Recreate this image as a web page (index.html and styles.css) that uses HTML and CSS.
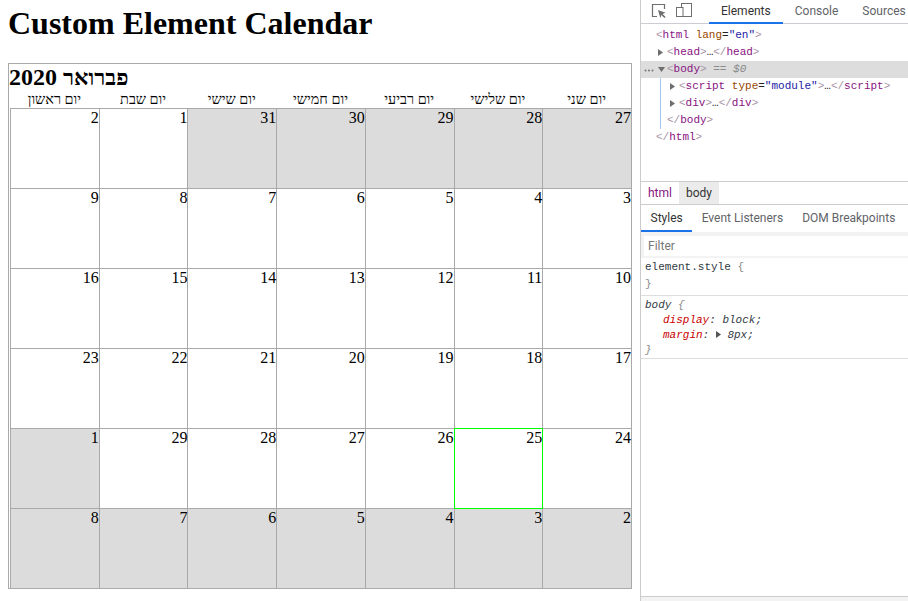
FILE: index.html
```html
<!DOCTYPE html>
<html lang="en">
<head>
<meta charset="utf-8">
<title>Custom Element Calendar</title>
<link rel="stylesheet" href="styles.css">
</head>
<body>
<div class="screen">
  <main class="page">
    <h1 class="title">Custom Element Calendar</h1>
    <div class="calendar">
      <h2 class="month"><span class="month-name">פברואר</span> 2020</h2>
      <div class="weekdays">
        <div>יום שני</div>
        <div>יום שלישי</div>
        <div>יום רביעי</div>
        <div>יום חמישי</div>
        <div>יום שישי</div>
        <div>יום שבת</div>
        <div>יום ראשון</div>
      </div>
      <div class="days">
        <div class="day other">27</div>
        <div class="day other">28</div>
        <div class="day other">29</div>
        <div class="day other">30</div>
        <div class="day other">31</div>
        <div class="day">1</div>
        <div class="day">2</div>

        <div class="day">3</div>
        <div class="day">4</div>
        <div class="day">5</div>
        <div class="day">6</div>
        <div class="day">7</div>
        <div class="day">8</div>
        <div class="day">9</div>

        <div class="day">10</div>
        <div class="day">11</div>
        <div class="day">12</div>
        <div class="day">13</div>
        <div class="day">14</div>
        <div class="day">15</div>
        <div class="day">16</div>

        <div class="day">17</div>
        <div class="day">18</div>
        <div class="day">19</div>
        <div class="day">20</div>
        <div class="day">21</div>
        <div class="day">22</div>
        <div class="day">23</div>

        <div class="day">24</div>
        <div class="day today">25</div>
        <div class="day">26</div>
        <div class="day">27</div>
        <div class="day">28</div>
        <div class="day">29</div>
        <div class="day other">1</div>

        <div class="day other">2</div>
        <div class="day other">3</div>
        <div class="day other">4</div>
        <div class="day other">5</div>
        <div class="day other">6</div>
        <div class="day other">7</div>
        <div class="day other">8</div>
      </div>
    </div>
  </main>

  <aside class="devtools">
    <div class="toolbar">
      <span class="tool tool-inspect">
        <svg width="16" height="16" viewBox="0 0 16 16"><path d="M6 13.5H1.5V1.5H13.5V6" fill="none" stroke="#6e6e6e" stroke-width="1.2"/><path d="M7 7L14.5 9.8L11.6 10.9L14.6 13.9L13.4 15.1L10.4 12.1L9.3 15Z" fill="#6e6e6e"/></svg>
      </span>
      <span class="tool tool-device">
        <svg width="16" height="16" viewBox="0 0 16 16"><rect x="5.5" y="0.5" width="10" height="13" fill="none" stroke="#6e6e6e"/><rect x="0.5" y="4.5" width="6.5" height="9" fill="#fff" stroke="#6e6e6e"/></svg>
      </span>
      <span class="tool-sep"></span>
      <span class="tab active">Elements</span>
      <span class="tab">Console</span>
      <span class="tab">Sources</span>
    </div>

    <div class="tree">
      <div class="row pad-root"><span class="tg">&lt;</span><span class="tn">html</span> <span class="an">lang</span>=<span class="av">"en"</span><span class="tg">&gt;</span></div>
      <div class="row pad-1"><span class="twisty"><svg width="5" height="7" viewBox="0 0 5 7"><path d="M0 0L5 3.5L0 7Z" fill="#6e6e6e"/></svg></span><span class="tg">&lt;</span><span class="tn">head</span><span class="tg">&gt;</span>…<span class="tg">&lt;/</span><span class="tn">head</span><span class="tg">&gt;</span></div>
      <div class="row row-selected"><span class="dots"><svg width="10" height="3" viewBox="0 0 10 3"><circle cx="1.5" cy="1.5" r="1" fill="#777"/><circle cx="5" cy="1.5" r="1" fill="#777"/><circle cx="8.5" cy="1.5" r="1" fill="#777"/></svg></span><span class="twisty"><svg width="7" height="5" viewBox="0 0 7 5"><path d="M0 0H7L3.5 5Z" fill="#6e6e6e"/></svg></span><span class="tg">&lt;</span><span class="tn">body</span><span class="tg">&gt;</span><span class="eq"> == $0</span></div>
      <div class="children">
        <div class="row pad-c1"><span class="twisty"><svg width="5" height="7" viewBox="0 0 5 7"><path d="M0 0L5 3.5L0 7Z" fill="#6e6e6e"/></svg></span><span class="tg">&lt;</span><span class="tn">script</span> <span class="an">type</span>=<span class="av">"module"</span><span class="tg">&gt;</span>…<span class="tg">&lt;/</span><span class="tn">script</span><span class="tg">&gt;</span></div>
        <div class="row pad-c1"><span class="twisty"><svg width="5" height="7" viewBox="0 0 5 7"><path d="M0 0L5 3.5L0 7Z" fill="#6e6e6e"/></svg></span><span class="tg">&lt;</span><span class="tn">div</span><span class="tg">&gt;</span>…<span class="tg">&lt;/</span><span class="tn">div</span><span class="tg">&gt;</span></div>
        <div class="row pad-c2"><span class="tg">&lt;/</span><span class="tn">body</span><span class="tg">&gt;</span></div>
      </div>
      <div class="row pad-root"><span class="tg">&lt;/</span><span class="tn">html</span><span class="tg">&gt;</span></div>
    </div>

    <div class="crumbs">
      <span class="crumb crumb-tag">html</span>
      <span class="crumb crumb-sel">body</span>
    </div>

    <div class="subtabs">
      <span class="subtab active">Styles</span>
      <span class="subtab">Event Listeners</span>
      <span class="subtab">DOM Breakpoints</span>
    </div>

    <div class="filter-bar">
      <div class="filter">Filter</div>
    </div>

    <div class="rule rule-element">
      <div>element.style <span class="brace">{</span></div>
      <div class="brace">}</div>
    </div>
    <div class="rule rule-ua">
      <div>body <span class="brace">{</span></div>
      <div class="decl"><span class="prop">display</span>: block;</div>
      <div class="decl"><span class="prop">margin</span>: <svg class="expand" width="5" height="7" viewBox="0 0 5 7"><path d="M0 0L5 3.5L0 7Z" fill="#555"/></svg> 8px;</div>
      <div class="brace">}</div>
    </div>

    <div class="spacer"></div>
    <div class="statusbar"></div>
  </aside>
</div>
</body>
</html>
```
FILE: styles.css
```css
* {
  box-sizing: border-box;
}

body {
  margin: 0;
  background: #fff;
}

.screen {
  display: flex;
  width: 908px;
  height: 601px;
  overflow: hidden;
}

/* ---------- page ---------- */
.page {
  flex: none;
  width: 640px;
  padding: 5px 8px 0;
  font-family: "Liberation Serif", "Times New Roman", serif;
  color: #000;
}

.title {
  margin: 0 0 21px;
  font-size: 32px;
  line-height: 37px;
  font-weight: bold;
}

.calendar {
  border: 1px solid #a9a9a9;
}

.month {
  margin: 0;
  height: 26px;
  overflow: hidden;
  font-size: 24px;
  line-height: 26px;
  font-weight: bold;
  direction: ltr;
  text-align: left;
}

.month-name {
  font-size: 22.5px;
}

.weekdays {
  display: grid;
  grid-template-columns: repeat(7, 1fr);
  direction: rtl;
  margin-left: 1px;
  height: 18px;
  padding-top: 1px;
  font-size: 14.4px;
  line-height: 17px;
  text-align: center;
  overflow: hidden;
}

.days {
  display: grid;
  grid-template-columns: repeat(7, 1fr);
  grid-auto-rows: 80px;
  direction: rtl;
  margin-left: 1px;
  font-size: 16px;
  line-height: 18px;
}

.day {
  border-top: 1px solid #a9a9a9;
  border-left: 1px solid #a9a9a9;
  text-align: right;
}

.day.other {
  background: #dcdcdc;
}

.day.today {
  position: relative;
  z-index: 1;
}

.day.today::after {
  content: "";
  position: absolute;
  top: -1px;
  left: -1px;
  right: -1px;
  bottom: -1px;
  border: 1px solid #00ff00;
}

/* ---------- devtools ---------- */
.devtools {
  flex: none;
  width: 268px;
  border-left: 1px solid #cccccc;
  display: flex;
  flex-direction: column;
  font-family: Roboto, "Segoe UI", sans-serif;
  font-size: 12px;
  color: #333;
  background: #fff;
}

.toolbar {
  flex: none;
  height: 24px;
  border-bottom: 1px solid #cacdd1;
  display: flex;
  align-items: center;
  padding-left: 10px;
}

.tool {
  display: flex;
  width: 16px;
  height: 16px;
}

.tool-inspect {
  margin-top: -2px;
}

.tool-device {
  margin-left: 9px;
  margin-top: -1px;
}

.tool-sep {
  width: 1px;
  height: 16px;
  background: #cccccc;
  margin: 0 6px 0 11px;
}

.tab {
  align-self: stretch;
  height: 24px;
  margin-bottom: -1px;
  padding: 0 12px;
  line-height: 22px;
  color: #5f6368;
  white-space: nowrap;
}

.tab.active {
  color: #333;
  box-shadow: inset 0 -2px 0 #1a73e8;
}

.tree {
  flex: none;
  height: 157px;
  padding-top: 3px;
  font-family: "Liberation Mono", "DejaVu Sans Mono", monospace;
  font-size: 11px;
  color: #222;
}

.row {
  height: 17px;
  line-height: 17px;
  white-space: nowrap;
}

.pad-root {
  padding-left: 15px;
}

.pad-1 {
  padding-left: 17px;
}

.row-selected {
  background: #dddddd;
  padding-left: 2px;
}

.children {
  margin-left: 19px;
  border-left: 1px solid #a8c6ef;
}

.pad-c1 {
  padding-left: 9px;
}

.pad-c2 {
  padding-left: 6px;
}

.twisty {
  display: inline-block;
  width: 9px;
  vertical-align: top;
}

.twisty svg {
  display: block;
  margin-top: 5px;
}

.row-selected .twisty svg {
  margin-top: 6px;
}

.dots {
  display: inline-block;
  width: 15px;
  vertical-align: top;
}

.dots svg {
  display: block;
  margin-top: 8px;
  margin-left: 1px;
}

.tg {
  color: #a894a6;
}

.tn {
  color: #881280;
}

.an {
  color: #994500;
}

.av {
  color: #1a1aa6;
}

.eq {
  color: #8a8a8a;
  font-style: italic;
}

.crumbs {
  flex: none;
  height: 24px;
  border-top: 1px solid #cccccc;
  border-bottom: 1px solid #cccccc;
  display: flex;
}

.crumb {
  padding: 0 7px;
  line-height: 22px;
}

.crumb-tag {
  color: #881280;
}

.crumb-sel {
  background: #ebebeb;
  color: #333;
}

.subtabs {
  flex: none;
  height: 27px;
  display: flex;
}

.subtab {
  padding: 0 9.5px;
  line-height: 26px;
  color: #5f6368;
  white-space: nowrap;
}

.subtab.active {
  color: #333;
  box-shadow: inset 0 -2px 0 #1a73e8;
}

.filter-bar {
  flex: none;
  height: 26px;
  background: #f3f3f3;
  padding: 4px 0 2px 3px;
}

.filter {
  height: 20px;
  background: #fff;
  padding-left: 4px;
  line-height: 20px;
  color: #777;
}

.rule {
  flex: none;
  font-family: "Liberation Mono", "DejaVu Sans Mono", monospace;
  font-size: 11px;
  color: #303942;
  border-bottom: 1px solid #dddddd;
  padding-left: 4px;
  white-space: nowrap;
}

.rule-element {
  line-height: 17px;
  padding-top: 1px;
  padding-bottom: 2px;
}

.rule-ua {
  line-height: 15px;
  padding-top: 2px;
  font-style: italic;
}

.brace {
  color: #8a8a8a;
}

.decl {
  padding-left: 18px;
}

.prop {
  color: #c80000;
}

.expand {
  vertical-align: 0;
}

.spacer {
  flex: 1;
}

.statusbar {
  flex: none;
  height: 5px;
  border-top: 1px solid #cccccc;
  background: #f3f3f3;
}
```
